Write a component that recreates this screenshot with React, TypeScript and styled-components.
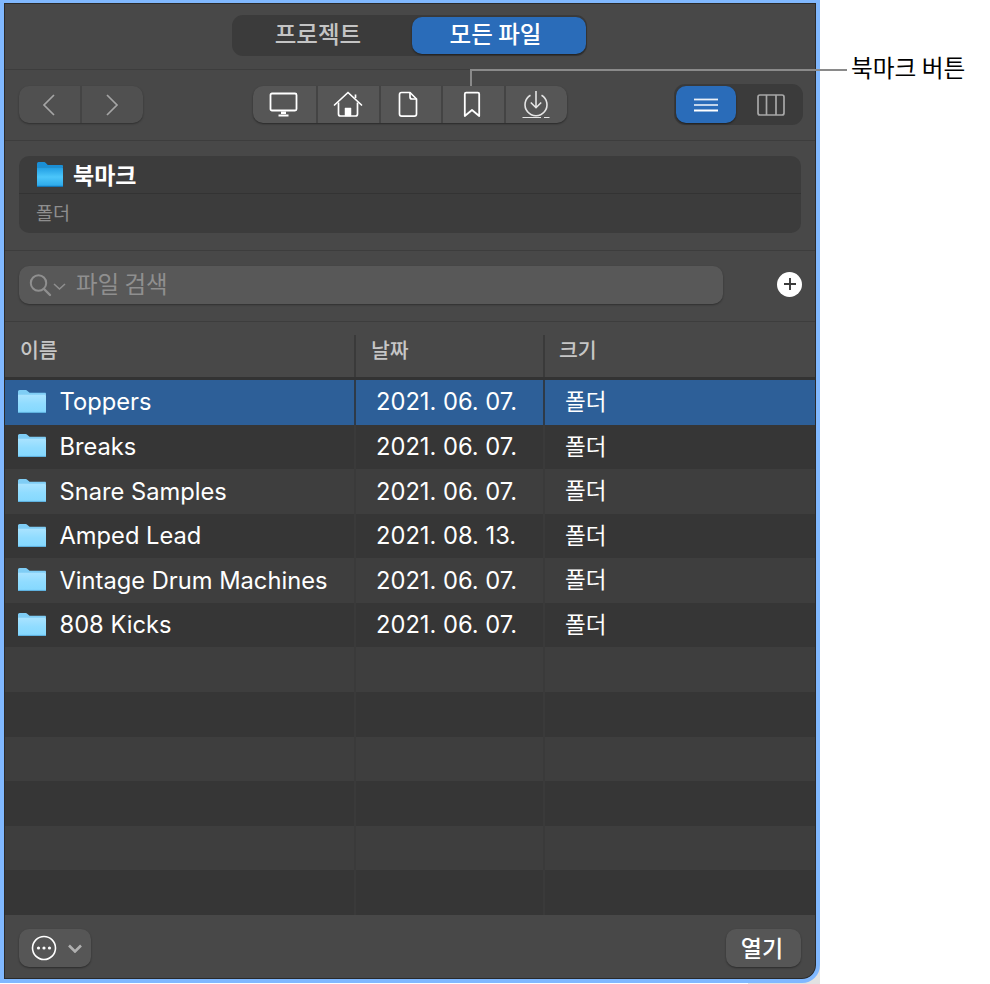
import { createGlobalStyle, styled } from "styled-components";

const GlobalStyle = createGlobalStyle`
  html, body {
    margin: 0;
    background: #fff;
  }
  * {
    box-sizing: border-box;
  }
`;

const KR = `"Noto Sans CJK KR", "Noto Sans", sans-serif`;
const LATIN = `Inter, "Noto Sans CJK KR", sans-serif`;

const files = [
  { name: "Toppers", date: "2021. 06. 07." },
  { name: "Breaks", date: "2021. 06. 07." },
  { name: "Snare Samples", date: "2021. 06. 07." },
  { name: "Amped Lead", date: "2021. 08. 13." },
  { name: "Vintage Drum Machines", date: "2021. 06. 07." },
  { name: "808 Kicks", date: "2021. 06. 07." },
];
const EMPTY_ROWS = 6;

type FolderProps = { id: string; light?: boolean; width: number; height: number };

const FolderIcon = ({ id, light = true, width, height }: FolderProps) => (
  <svg width={width} height={height} viewBox="1 2 28 21.2" preserveAspectRatio="none">
    <defs>
      <linearGradient id={id} x1="0" y1="0" x2="0" y2="1">
        <stop offset="0" stopColor={light ? "#a9e3ff" : "#1f9ce2"} />
        <stop offset="0.5" stopColor={light ? "#90dcff" : "#4cc6fa"} />
        <stop offset="1" stopColor={light ? "#84d8fe" : "#2aa6e8"} />
      </linearGradient>
    </defs>
    <path
      d="M1 5V3.6C1 2.7 1.7 2 2.6 2h6.2c.6 0 1 .2 1.4.6L12.6 4.6H28c.6 0 1 .5 1 1v1H1z"
      fill={light ? "#7fcdf5" : "#1a8fd6"}
    />
    <path
      d="M1 6.4h27c.6 0 1 .4 1 1V22c0 .6-.4 1-1 1H2c-.6 0-1-.4-1-1z"
      fill={`url(#${id})`}
    />
    <rect x="1" y="22.2" width="28" height="1" fill={light ? "#5fb2e0" : "#1376b8"} />
  </svg>
);

const Icons = {
  back: (
    <svg width="14" height="22" viewBox="0 0 14 22" fill="none" stroke="#a5a5a5" strokeWidth="1.7">
      <path d="M12 1 2 11l10 10" />
    </svg>
  ),
  forward: (
    <svg width="14" height="22" viewBox="0 0 14 22" fill="none" stroke="#a5a5a5" strokeWidth="1.7">
      <path d="m2 1 10 10L2 21" />
    </svg>
  ),
  desktop: (
    <svg width="30" height="26" viewBox="0 0 30 26" fill="none" stroke="#fff" strokeWidth="1.8">
      <rect x="1.5" y="1.5" width="26" height="17" rx="1.5" />
      <path d="M12 19.5h5v2.5h-5z" fill="#fff" strokeWidth="0" />
      <path d="M9.5 23.5h10" strokeWidth="1.8" />
    </svg>
  ),
  home: (
    <svg width="30" height="27" viewBox="0 0 30 27" fill="none" stroke="#fff" strokeWidth="1.7">
      <path d="M1.5 14 15 1.5 28.5 14" strokeLinecap="round" strokeLinejoin="round" />
      <path d="M22.5 7V3.5" />
      <path d="M5.5 11.5V23c0 1.2.8 2 2 2h15c1.2 0 2-.8 2-2V11.5" />
      <path d="M12 25v-8h6v8z" fill="#fff" strokeWidth="0.5" />
    </svg>
  ),
  document: (
    <svg width="22" height="27" viewBox="0 0 22 27" fill="none" stroke="#fff" strokeWidth="1.7">
      <path d="M3.5 1.5h8.5L18.5 8v15c0 1.4-.8 2.2-2.2 2.2H3.7c-1.4 0-2.2-.8-2.2-2.2V3.7c0-1.4.8-2.2 2-2.2z" strokeLinejoin="round" />
      <path d="M12 1.5V6c0 1.3.7 2 2 2h4.5" strokeLinejoin="round" />
    </svg>
  ),
  bookmark: (
    <svg width="18" height="27" viewBox="0 0 18 27" fill="none" stroke="#fff" strokeWidth="1.8">
      <path d="M1.8 25V3c0-.9.5-1.4 1.4-1.4h11.6c.9 0 1.4.5 1.4 1.4v22L9 19z" strokeLinejoin="round" />
    </svg>
  ),
  download: (
    <svg width="28" height="28" viewBox="0 0 28 28" fill="none" stroke="#e4e4e4" strokeWidth="1.6">
      <path d="M8.5 4.2a11 11 0 1 0 11 0" />
      <path d="M14 0v16.5M8.8 11.5l5.2 5.2 5.2-5.2" />
      <path d="M0.5 26.5H19M22 26.5h5.5" strokeWidth="1.2" />
    </svg>
  ),
  list: (
    <svg width="26" height="14" viewBox="0 0 26 14" stroke="#fff" strokeWidth="1.8">
      <path d="M1 1.5h24" opacity="0.9" />
      <path d="M1 7h24" opacity="0.8" />
      <path d="M1 12.5h24" />
    </svg>
  ),
  columns: (
    <svg width="28" height="22" viewBox="0 0 28 22" fill="none" stroke="#a8a8a8" strokeWidth="1.7">
      <rect x="1" y="1" width="26" height="20" rx="2" />
      <path d="M9.5 1v20M19 1v20" />
    </svg>
  ),
  search: (
    <svg width="38" height="24" viewBox="0 0 38 24" fill="none" stroke="#8f8f8f">
      <circle cx="9.5" cy="10" r="7.7" strokeWidth="2" />
      <path d="m15 16 6 6" strokeWidth="2.4" strokeLinecap="round" />
      <path d="m25 11 5.5 5 5.5-5" strokeWidth="1.6" />
    </svg>
  ),
  more: (
    <svg width="26" height="26" viewBox="0 0 26 26">
      <circle cx="13" cy="13" r="11.5" fill="none" stroke="#fff" strokeWidth="1.6" />
      <circle cx="7.5" cy="13" r="1.6" fill="#fff" />
      <circle cx="13" cy="13" r="1.6" fill="#fff" />
      <circle cx="18.5" cy="13" r="1.6" fill="#fff" />
    </svg>
  ),
  chevron: (
    <svg width="14" height="9" viewBox="0 0 14 9" fill="none" stroke="#b0b0b0" strokeWidth="2.6">
      <path d="m1 1.5 6 6 6-6" />
    </svg>
  ),
};

export default function App() {
  return (
    <Page>
      <GlobalStyle />
      <Frame>
        <Dialog>
          <TabSection>
            <Tabs>
              <Tab>프로젝트</Tab>
              <Tab $active>모든 파일</Tab>
            </Tabs>
          </TabSection>

          <Toolbar>
            <NavGroup>
              <NavButton>{Icons.back}</NavButton>
              <NavButton>{Icons.forward}</NavButton>
            </NavGroup>
            <PlaceGroup>
              <PlaceButton>{Icons.desktop}</PlaceButton>
              <PlaceButton>{Icons.home}</PlaceButton>
              <PlaceButton $nudge>{Icons.document}</PlaceButton>
              <PlaceButton $nudge>{Icons.bookmark}</PlaceButton>
              <PlaceButton>{Icons.download}</PlaceButton>
            </PlaceGroup>
            <ViewGroup>
              <ViewButton $active>{Icons.list}</ViewButton>
              <ViewButton>{Icons.columns}</ViewButton>
            </ViewGroup>
          </Toolbar>

          <InfoSection>
            <InfoPanel>
              <InfoTitle>
                <FolderIcon id="info-folder" light={false} width={26} height={25} />
                <span>북마크</span>
              </InfoTitle>
              <InfoKind>폴더</InfoKind>
            </InfoPanel>
          </InfoSection>

          <SearchSection>
            <SearchField>
              {Icons.search}
              <SearchText>파일 검색</SearchText>
            </SearchField>
            <AddButton>
              <svg width="14" height="14" viewBox="0 0 14 14" stroke="#3a3a3a" strokeWidth="1.9">
                <path d="M7 1v12M1 7h12" />
              </svg>
            </AddButton>
          </SearchSection>

          <ColumnHeader>
            <HeaderCell $col="name">이름</HeaderCell>
            <HeaderCell $col="date">날짜</HeaderCell>
            <HeaderCell $col="size">크기</HeaderCell>
          </ColumnHeader>

          <List>
            {files.map((file, i) => (
              <Row key={file.name} $selected={i === 0} $odd={i % 2 === 1}>
                <NameCell>
                  <FolderIcon id={`row-folder-${i}`} width={28} height={23} />
                  {file.name}
                </NameCell>
                <DateCell>{file.date}</DateCell>
                <SizeCell>폴더</SizeCell>
              </Row>
            ))}
            {Array.from({ length: EMPTY_ROWS }, (_, i) => (
              <Row key={i} $odd={(i + files.length) % 2 === 1}>
                <NameCell />
                <DateCell />
                <SizeCell />
              </Row>
            ))}
          </List>

          <Footer>
            <MoreButton>
              {Icons.more}
              {Icons.chevron}
            </MoreButton>
            <OpenButton>열기</OpenButton>
          </Footer>
        </Dialog>
      </Frame>

      <CalloutDrop />
      <CalloutLine />
      <CalloutLabel>북마크 버튼</CalloutLabel>
    </Page>
  );
}

const Page = styled.div`
  position: relative;
  width: 990px;
  height: 984px;
  background: #fff;
  overflow: hidden;
`;

const Frame = styled.div`
  width: 820px;
  height: 984px;
  padding-bottom: 1px;
  background: linear-gradient(135deg, #fff 96%, #e2e2e2 96%);
`;

const Dialog = styled.div`
  display: flex;
  flex-direction: column;
  height: 983px;
  border: 4px solid #80b8ff;
  border-top-width: 3px;
  border-bottom-right-radius: 18px;
  background: #484848;
  box-shadow: inset 0 0 0 1px #2a2a2a;
  padding: 1px;
  overflow: hidden;
`;

const Section = styled.div`
  flex: none;
  border-bottom: 1px solid #3d3d3d;
`;

const TabSection = styled(Section)`
  display: flex;
  justify-content: center;
  align-items: center;
  height: 66px;
  padding: 0 1px 2px 0;
`;

const Tabs = styled.div`
  display: flex;
  align-items: center;
  width: 355px;
  height: 41px;
  padding: 0 1px 0 0;
  border-radius: 11px;
  background: #3b3b3b;
`;

const Tab = styled.div<{ $active?: boolean }>`
  display: flex;
  justify-content: center;
  align-items: center;
  height: ${(p) => (p.$active ? "37px" : "41px")};
  width: ${(p) => (p.$active ? "174px" : "180px")};
  padding-bottom: ${(p) => (p.$active ? "6px" : "5px")};
  padding-right: ${(p) => (p.$active ? "7px" : "8px")};
  border-radius: 10px;
  background: ${(p) => (p.$active ? "#2a6cb9" : "transparent")};
  box-shadow: ${(p) => (p.$active ? "0 1px 2px rgba(0, 0, 0, 0.5)" : "none")};
  color: ${(p) => (p.$active ? "#fff" : "#c4c4c4")};
  font-family: ${KR};
  font-size: 23.5px;
  font-weight: 500;
`;

const Toolbar = styled(Section)`
  display: flex;
  align-items: center;
  height: 71px;
  padding: 0 12px 1px 14px;
`;

const NavGroup = styled.div`
  display: flex;
  width: 124px;
  height: 37px;
  border-radius: 10px;
  background: #505050;
  box-shadow: 0 1px 2px rgba(0, 0, 0, 0.35);
  margin-right: 110px;
`;

const NavButton = styled.div`
  flex: 1;
  display: flex;
  justify-content: center;
  align-items: center;
  padding-right: 2px;
  & + & {
    border-left: 2px solid #444;
  }
`;

const PlaceGroup = styled.div`
  display: flex;
  width: 314px;
  height: 37px;
  border-radius: 10px;
  background: #565656;
  box-shadow: 0 1px 2px rgba(0, 0, 0, 0.45);
  margin-right: 107px;
`;

const PlaceButton = styled.div<{ $nudge?: boolean }>`
  flex: 0 0 20%;
  display: flex;
  justify-content: center;
  align-items: center;
  padding-right: ${(p) => (p.$nudge ? "3px" : "1px")};
  & + & {
    border-left: 2px solid #444;
  }
`;

const ViewGroup = styled.div`
  display: flex;
  align-items: center;
  width: 129px;
  height: 41px;
  padding-left: 2px;
  border-radius: 11px;
  background: #3b3b3b;
`;

const ViewButton = styled.div<{ $active?: boolean }>`
  display: flex;
  justify-content: center;
  align-items: center;
  width: ${(p) => (p.$active ? "60px" : "67px")};
  height: 37px;
  padding-left: ${(p) => (p.$active ? "0" : "2px")};
  border-radius: 10px;
  background: ${(p) => (p.$active ? "#2a6cb9" : "transparent")};
  box-shadow: ${(p) => (p.$active ? "0 1px 2px rgba(0, 0, 0, 0.5)" : "none")};
`;

const InfoSection = styled(Section)`
  height: 110px;
  padding: 15px 14px 0;
`;

const InfoPanel = styled.div`
  width: 782px;
  height: 77px;
  border-radius: 10px;
  background: #3c3c3c;
  color: #fff;
  font-family: ${KR};
`;

const InfoTitle = styled.div`
  display: flex;
  align-items: center;
  gap: 10px;
  height: 38px;
  padding: 0 0 1px 18px;
  border-bottom: 1px solid #333;
  font-size: 23px;
  font-weight: 700;
  line-height: 1;
  span {
    padding-top: 1px;
  }
`;

const InfoKind = styled.div`
  padding: 7px 0 0 17px;
  color: #8e8e8e;
  font-size: 18.5px;
  line-height: 22px;
`;

const SearchSection = styled(Section)`
  display: flex;
  align-items: center;
  height: 71px;
  padding: 0 12px 2px 14px;
`;

const SearchField = styled.div`
  display: flex;
  align-items: center;
  gap: 9px;
  width: 704px;
  height: 38px;
  padding-left: 10px;
  border-radius: 10px;
  background: #585858;
  box-shadow: 0 1px 2px rgba(0, 0, 0, 0.35);
`;

const SearchText = styled.span`
  padding-bottom: 3px;
  color: #8f8f8f;
  font-family: ${KR};
  font-size: 23.5px;
  line-height: 1;
`;

const AddButton = styled.div`
  display: flex;
  justify-content: center;
  align-items: center;
  width: 25px;
  height: 25px;
  margin: 0 0 2px 54px;
  border-radius: 50%;
  background: #fff;
`;

const columnWidth = { name: "351px", date: "189px", size: "270px" };

const ColumnHeader = styled.div`
  display: grid;
  grid-template-columns: ${columnWidth.name} ${columnWidth.date} ${columnWidth.size};
  flex: none;
  height: 58px;
  padding-top: 13px;
  border-bottom: 3px solid #333;
`;

const HeaderCell = styled.div<{ $col: "name" | "date" | "size" }>`
  padding-left: ${(p) => (p.$col === "size" ? "14px" : "15px")};
  border-right: ${(p) => (p.$col === "size" ? "none" : "2px solid #3a3a3a")};
  color: #c6c6c6;
  font-family: ${KR};
  font-size: 20.5px;
  font-weight: 500;
  line-height: 28px;
`;

const List = styled.div`
  display: grid;
  grid-auto-rows: 1fr;
  flex: 1;
  min-height: 0;
`;

const Row = styled.div<{ $selected?: boolean; $odd?: boolean }>`
  display: grid;
  grid-template-columns: ${columnWidth.name} ${columnWidth.date} ${columnWidth.size};
  align-items: center;
  background: ${(p) => (p.$selected ? "#2d5f98" : p.$odd ? "#363636" : "#3e3e3e")};
  color: #fff;
  font-family: ${LATIN};
  font-size: 23.7px;
  --cell-line: ${(p) => (p.$selected ? "#2e3a48" : "#3a3a3a")};
`;

const Cell = styled.div`
  display: flex;
  align-items: center;
  height: 100%;
  line-height: 1;
  white-space: nowrap;
`;

const NameCell = styled(Cell)`
  gap: 13.5px;
  padding-left: 13px;
  border-right: 2px solid var(--cell-line);
  svg {
    flex: none;
    margin-bottom: 2px;
  }
`;

const DateCell = styled(Cell)`
  padding-left: 20px;
  border-right: 2px solid var(--cell-line);
`;

const SizeCell = styled(Cell)`
  padding-left: 20px;
  padding-bottom: 4px;
  font-family: ${KR};
  font-size: 22.5px;
`;

const Footer = styled.div`
  display: flex;
  flex: none;
  justify-content: space-between;
  align-items: center;
  height: 63px;
  padding: 3px 14px 0;
`;

const FooterButton = styled.div`
  display: flex;
  align-items: center;
  height: 38px;
  border-radius: 10px;
  background: #565656;
  box-shadow: 0 1px 2px rgba(0, 0, 0, 0.4);
`;

const MoreButton = styled(FooterButton)`
  gap: 11px;
  width: 72px;
  padding-left: 12px;
`;

const OpenButton = styled(FooterButton)`
  justify-content: center;
  width: 75px;
  padding: 0 3px 3px 0;
  color: #fff;
  font-family: ${KR};
  font-size: 23px;
  font-weight: 500;
`;

/* callout sits on top of the dialog, so these three are absolute */
const CalloutDrop = styled.div`
  position: absolute;
  left: 470px;
  top: 69px;
  width: 2px;
  height: 17px;
  background: #8a8a8a;
`;

const CalloutLine = styled.div`
  position: absolute;
  left: 470px;
  top: 69px;
  width: 377px;
  height: 2px;
  background: #8a8a8a;
`;

const CalloutLabel = styled.div`
  position: absolute;
  left: 851px;
  top: 51px;
  color: #000;
  font-family: ${KR};
  font-size: 23.7px;
  line-height: 32px;
  white-space: nowrap;
`;
